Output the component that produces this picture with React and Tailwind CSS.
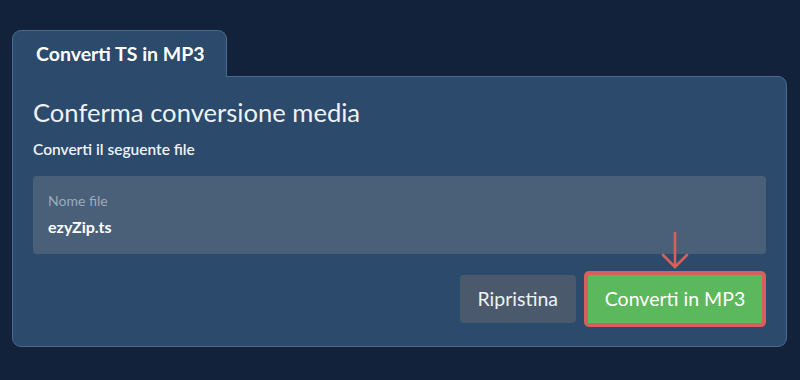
import React from 'react';

const App = () => {
  return (
    <div
      className="w-[800px] h-[380px] bg-[#11223a] pt-[30px] pl-[12px] pr-[13px]"
      style={{ fontFamily: 'Lato, "Open Sans", sans-serif' }}
    >
      {/* Tab */}
      <div className="w-[215px] h-[47px] bg-[#2c4a6b] border border-b-0 border-[#4c6a8c] rounded-t-[9px] pl-[23px] pt-[12px] whitespace-nowrap relative z-10">
        <span className="text-[19.5px] font-bold text-white leading-none">Converti TS in MP3</span>
      </div>

      {/* Panel */}
      <div className="-mt-px bg-[#2c4a6b] border border-[#4c6a8c] rounded-tr-[9px] rounded-b-[9px] px-[20px] pt-[19px] pb-[19px] relative">
        <h2 className="text-[25.6px] leading-[32px] text-[#eef2f6]">Conferma conversione media</h2>
        <p className="mt-[11px] text-[15.5px] leading-[20px] font-semibold text-[#eef2f6]">Converti il seguente file</p>

        <div className="mt-[17px] h-[78px] bg-[#4a5f78] rounded-[4px] px-[15px] pt-[17px]">
          <div className="text-[14px] leading-[16px] text-[#9eabbb]">Nome file</div>
          <div className="mt-[9px] text-[16px] leading-[18px] font-bold text-white">ezyZip.ts</div>
        </div>

        <div className="mt-[17px] flex justify-end items-center gap-[8px]">
          <button className="h-[48px] px-[18px] bg-[#4a5a6c] rounded-[4px] text-[19.5px] text-[#eef2f6]">
            Ripristina
          </button>
          <div className="relative border-4 border-[#d9605a] rounded-[5px]">
            <button className="h-[48px] w-[174px] bg-[#5cb85c] text-[19.5px] text-white">
              Converti in MP3
            </button>
            {/* pointer arrow */}
            <svg
              className="absolute left-[72px] top-[-44px]"
              width="30"
              height="39"
              viewBox="0 0 30 39"
              fill="none"
              stroke="#d9605a"
              strokeWidth="2.6"
              strokeLinecap="round"
              strokeLinejoin="round"
            >
              <path d="M15 2 V36" />
              <path d="M3 24 L15 36 L27 24" />
            </svg>
          </div>
        </div>
      </div>
    </div>
  );
};

export default App;
